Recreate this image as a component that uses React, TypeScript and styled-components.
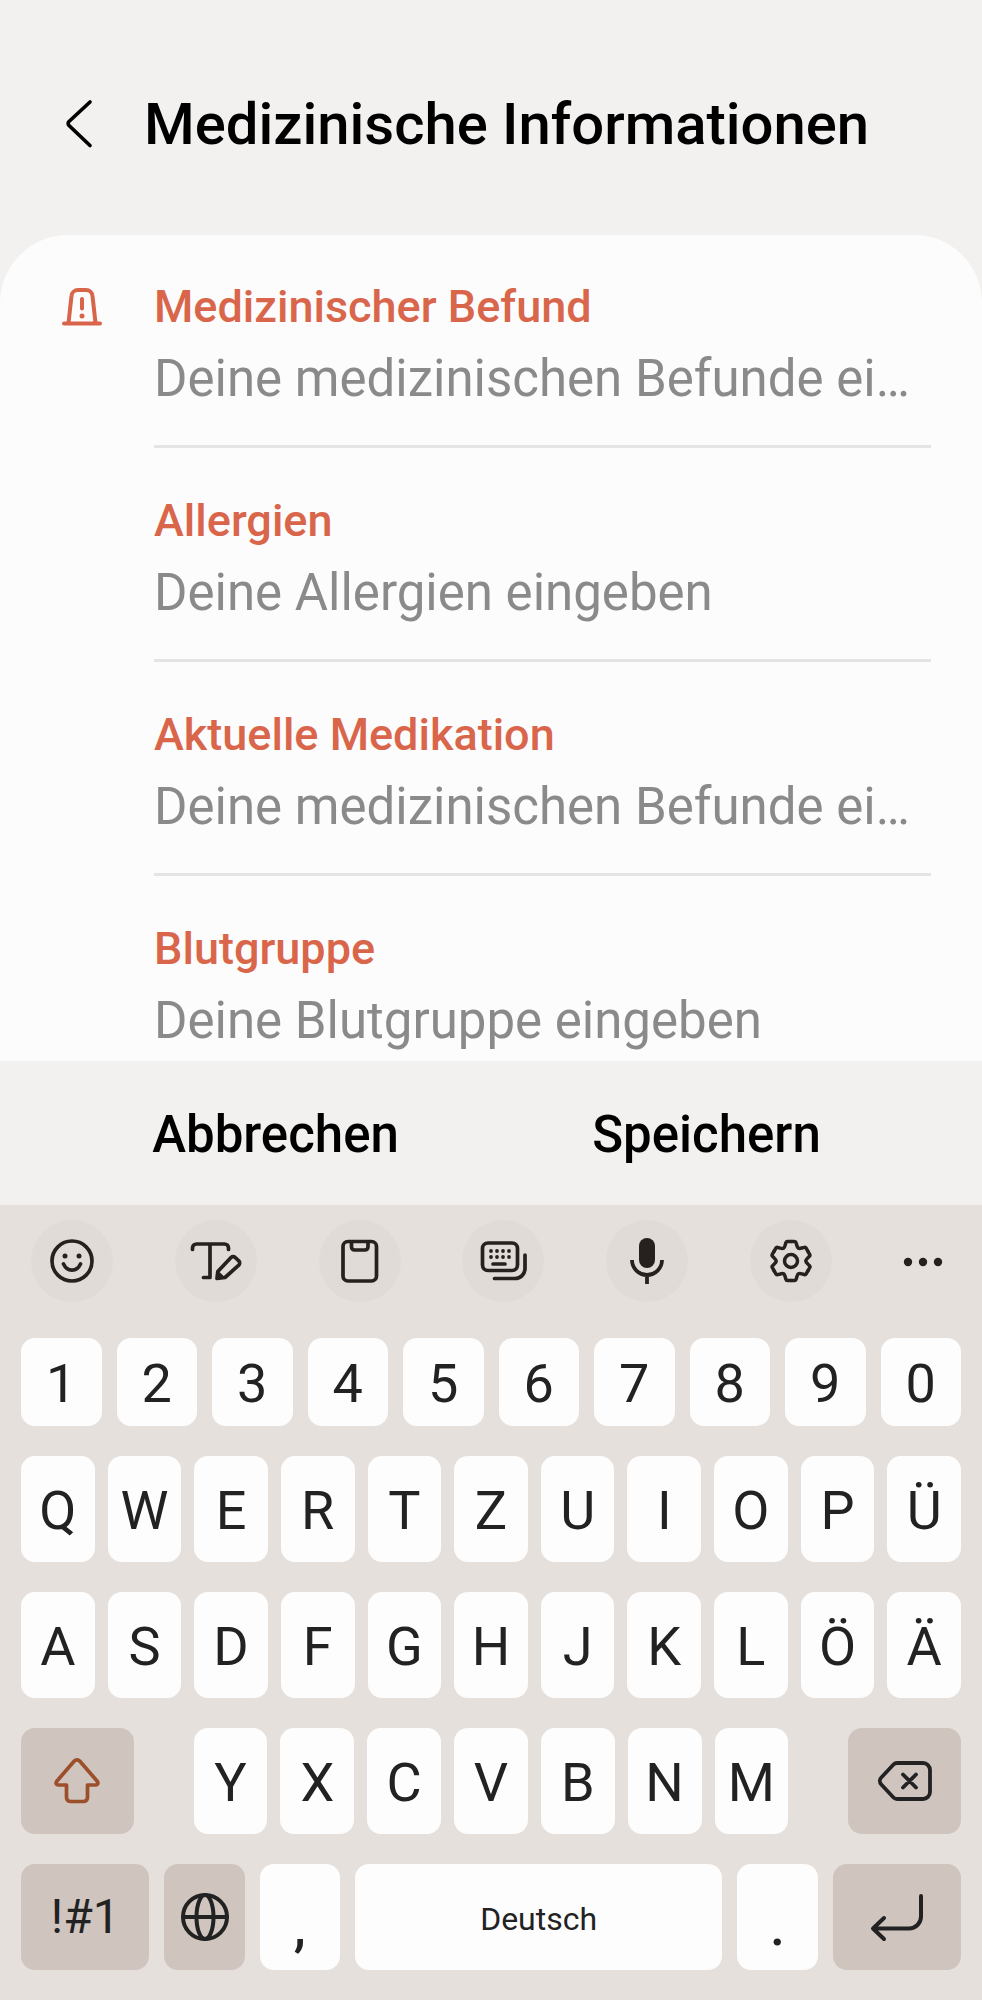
import React from "react";
import styled, { createGlobalStyle } from "styled-components";

const GlobalStyle = createGlobalStyle`
  *, *::before, *::after { box-sizing: border-box; }
  body { margin: 0; background: #f2f1ef; font-family: Roboto, "Noto Sans", sans-serif; color: #000; }
  button, input { font: inherit; color: inherit; border: 0; padding: 0; margin: 0; }
  button { cursor: pointer; }
`;

const Page = styled.div`
  display: flex;
  flex-direction: column;
  min-height: 100vh;
`;

const Header = styled.header`
  display: flex;
  align-items: center;
  gap: 40px;
  padding: 80px 40px 67px 54px;
`;

const BackButton = styled.button`
  display: flex;
  justify-content: center;
  width: 50px;
  background: none;
`;

const Title = styled.h1`
  margin: 0;
  font-size: 58px;
  line-height: 88px;
  font-weight: 500;
  white-space: nowrap;
`;

const Panel = styled.main`
  flex: 1;
  display: grid;
  grid-template-columns: 114px 1fr;
  align-items: start;
  padding: 42px 51px 0 40px;
  border-radius: 68px 68px 0 0;
  background: #fcfcfc;
`;

const AlertSlot = styled.div`
  display: flex;
  padding: 10px 0 0 21px;
`;

const FieldList = styled.div`
  min-width: 0;
`;

const FieldBlock = styled.div`
  padding: 43px 0 26px;
  border-bottom: 3px solid #e4e4e4;

  &:first-child { padding-top: 0; }
  &:last-child { padding-bottom: 0; border-bottom: 0; }
`;

const FieldLabel = styled.label`
  display: block;
  font-size: 45px;
  line-height: 60px;
  font-weight: 500;
  color: #d9664b;
`;

const FieldInput = styled.input`
  display: block;
  width: 100%;
  height: 82px;
  font-size: 51px;
  background: none;
  outline: none;
  text-overflow: ellipsis;

  &::placeholder { color: #8a8a8a; opacity: 1; }
`;

const Actions = styled.div`
  display: grid;
  grid-template-columns: 1fr 1fr;
  padding: 0 60px;
`;

const ActionButton = styled.button`
  height: 144px;
  padding-top: 4px;
  background: none;
  font-size: 51px;
  line-height: 64px;
  font-weight: 500;
`;

const Keyboard = styled.section`
  display: flex;
  flex-direction: column;
  gap: 30px;
  padding: 15px 21px 30px;
  background: #e6e0dd;
`;

const Toolbar = styled.div`
  display: flex;
  justify-content: space-between;
  align-items: center;
  padding: 0 9px 6px 10px;
`;

const ToolButton = styled.button<{ $plain?: boolean }>`
  display: flex;
  align-items: center;
  justify-content: center;
  width: ${(p) => (p.$plain ? 58 : 82)}px;
  height: 82px;
  border-radius: 50%;
  background: ${(p) => (p.$plain ? "none" : "#e1dbd8")};
  color: #26201e;
`;

const KeyRow = styled.div<{ $columns: string; $gap: number; $height: number }>`
  display: grid;
  grid-template-columns: ${(p) => p.$columns};
  gap: ${(p) => p.$gap}px;
  height: ${(p) => p.$height}px;
`;

const Key = styled.button<{ $size?: number }>`
  display: flex;
  align-items: center;
  justify-content: center;
  min-width: 0;
  padding-top: 4px;
  border-radius: 14px;
  background: #fdfdfd;
  color: #222;
  font-size: ${(p) => p.$size ?? 54}px;
  line-height: 64px;
`;

const FunctionKey = styled(Key)`
  padding-top: 0;
  background: #cfc4be;
`;

const PunctuationKey = styled(Key)`
  align-items: flex-end;
  padding: 0 0 11px;
  font-weight: 500;
`;

const stroke = {
  fill: "none",
  stroke: "currentColor",
  strokeWidth: 3.7,
  strokeLinecap: "round" as const,
  strokeLinejoin: "round" as const,
};

const SmileIcon = () => (
  <svg width="48" height="48" viewBox="0 0 48 48" aria-hidden="true">
    <g {...stroke}>
      <circle cx="24" cy="24" r="20" />
      <path d="M15.500 27c2 4.200 5 6.200 8.500 6.200s6.500-2 8.500-6.200" />
    </g>
    <circle cx="17" cy="19" r="2.500" fill="currentColor" />
    <circle cx="31" cy="19" r="2.500" fill="currentColor" />
  </svg>
);

const TextEditIcon = () => (
  <svg width="54" height="48" viewBox="0 0 54 48" aria-hidden="true">
    <g {...stroke}>
      <path d="M3.500 12.500V11a4 4 0 0 1 4-4h28a4 4 0 0 1 4 4v1.500M21 7v33M14.500 40.500H21" />
      <path d="M28 41.500l.8-7L42 20.500a3 3 0 0 1 4.200 0l3.600 3.400a3 3 0 0 1 0 4.200L36 40.500z" />
    </g>
    <path d="M28 42l.8-8.500 7.500 7z" fill="currentColor" />
  </svg>
);

const ClipboardIcon = () => (
  <svg width="48" height="48" viewBox="0 0 48 48" aria-hidden="true">
    <g {...stroke}>
      <rect x="7" y="4.500" width="33.500" height="39.500" rx="5" />
      <path d="M15.500 5v5a3 3 0 0 0 3 3h10.500a3 3 0 0 0 3-3V5" />
    </g>
  </svg>
);

const KeyboardsIcon = () => (
  <svg width="50" height="48" viewBox="-2 0 50 48" aria-hidden="true">
    <g {...stroke}>
      <rect x="2.500" y="6" width="35" height="27.500" rx="5.500" />
      <path d="M13 27h12M45 18v13.500a10 10 0 0 1-10 10H14.500" />
    </g>
    <g fill="currentColor">
      {[11, 17, 23, 29].map((x) => (
        <React.Fragment key={x}>
          <circle cx={x} cy="14" r="1.900" />
          <circle cx={x} cy="20" r="1.900" />
        </React.Fragment>
      ))}
    </g>
  </svg>
);

const MicIcon = () => (
  <svg width="48" height="48" viewBox="0 0 48 48" aria-hidden="true">
    <rect x="16" y="1" width="16" height="30" rx="8" fill="currentColor" />
    <path d="M9 23a15 15 0 0 0 30 0M24 38v9" fill="none" stroke="currentColor" strokeWidth="3.800" />
  </svg>
);

const GearIcon = () => (
  <svg width="48" height="48" viewBox="-24 -24 48 48" aria-hidden="true">
    <g {...stroke} strokeWidth="3.500">
      {[0, 60, 120, 180, 240, 300].map((angle) => (
        <path
          key={angle}
          transform={`rotate(${angle})`}
          d="M0-19.500H3.500Q4.800-19.500 5.100-18.300L5.800-15.800Q6.400-13.500 7.400-12.800Q8.300-12.300 10.800-13L13.200-13.600Q14.500-14 15.100-12.900L16.900-9.750"
        />
      ))}
      <circle r="6.500" />
    </g>
  </svg>
);

const MoreIcon = () => (
  <svg width="40" height="12" viewBox="0 0 40 12" fill="currentColor" aria-hidden="true">
    <circle cx="5" cy="7" r="4.200" />
    <circle cx="20" cy="7" r="4.200" />
    <circle cx="35" cy="7" r="4.200" />
  </svg>
);

const BackIcon = () => (
  <svg width="28" height="50" viewBox="0 0 28 50" aria-hidden="true">
    <path {...stroke} d="M25 3L4 22.500a2.800 2.800 0 0 0 0 4l21 20" />
  </svg>
);

const AlertIcon = () => (
  <svg width="42" height="40" viewBox="0 0 42 40" aria-hidden="true">
    <g fill="none" stroke="#d8654a" strokeWidth="4" strokeLinecap="round" strokeLinejoin="round">
      <path d="M3 36.500h36M7.500 36l3-27a6.500 6.500 0 0 1 6.500-6h8a6.500 6.500 0 0 1 6.500 6l3 27" />
      <path d="M21 12v9.500" />
    </g>
    <circle cx="21" cy="29" r="2.500" fill="#d8654a" />
  </svg>
);

const ShiftIcon = () => (
  <svg width="48" height="48" viewBox="0 0 48 48" aria-hidden="true">
    <path
      {...stroke}
      stroke="#9c4f2a"
      d="M21.300 4a3.800 3.800 0 0 1 5.400 0L44 24c1.700 2 .8 4-1.500 4H34.500V40.500a4 4 0 0 1-4 4h-13a4 4 0 0 1-4-4V28H5.500c-2.300 0-3.200-2-1.500-4z"
    />
  </svg>
);

const BackspaceIcon = () => (
  <svg width="56" height="44" viewBox="0 0 56 44" aria-hidden="true">
    <path
      {...stroke}
      strokeWidth="3.800"
      d="M20 4h26a7 7 0 0 1 7 7v22a7 7 0 0 1-7 7H20a5 5 0 0 1-3.500-1.500L4.300 25.500a5 5 0 0 1 0-7L16.500 5.500A5 5 0 0 1 20 4zM26 15.500l13 13M39 15.500l-13 13"
    />
  </svg>
);

const GlobeIcon = () => (
  <svg width="50" height="50" viewBox="0 0 50 50" aria-hidden="true">
    <g {...stroke} strokeWidth="4">
      <circle cx="25" cy="25" r="22" />
      <ellipse cx="25" cy="25" rx="8.500" ry="22" />
      <path d="M3 25h44" />
    </g>
  </svg>
);

const EnterIcon = () => (
  <svg width="54" height="50" viewBox="0 0 54 50" aria-hidden="true">
    <path {...stroke} strokeWidth="4" d="M51 4v20.500a12 12 0 0 1-12 12H3.500M14 26l-11 10.500 11 10.500" />
  </svg>
);

const fields = [
  { id: "befund", label: "Medizinischer Befund", hint: "Deine medizinischen Befunde eingeben" },
  { id: "allergien", label: "Allergien", hint: "Deine Allergien eingeben" },
  { id: "medikation", label: "Aktuelle Medikation", hint: "Deine medizinischen Befunde eingeben" },
  { id: "blutgruppe", label: "Blutgruppe", hint: "Deine Blutgruppe eingeben" },
];

const tools = [
  { name: "Emojis", icon: <SmileIcon /> },
  { name: "Text bearbeiten", icon: <TextEditIcon /> },
  { name: "Zwischenablage", icon: <ClipboardIcon /> },
  { name: "Tastaturmodi", icon: <KeyboardsIcon /> },
  { name: "Spracheingabe", icon: <MicIcon /> },
  { name: "Einstellungen", icon: <GearIcon /> },
];

const letterColumns = "repeat(11, minmax(0, 1fr))";

export default function App() {
  return (
    <>
      <GlobalStyle />
      <Page>
        <Header>
          <BackButton aria-label="Zurück">
            <BackIcon />
          </BackButton>
          <Title>Medizinische Informationen</Title>
        </Header>

        <Panel>
          <AlertSlot>
            <AlertIcon />
          </AlertSlot>
          <FieldList>
            {fields.map((f) => (
              <FieldBlock key={f.id}>
                <FieldLabel htmlFor={f.id}>{f.label}</FieldLabel>
                <FieldInput id={f.id} type="text" placeholder={f.hint} />
              </FieldBlock>
            ))}
          </FieldList>
        </Panel>

        <Actions>
          <ActionButton>Abbrechen</ActionButton>
          <ActionButton>Speichern</ActionButton>
        </Actions>

        <Keyboard>
          <Toolbar>
            {tools.map((t) => (
              <ToolButton key={t.name} aria-label={t.name}>
                {t.icon}
              </ToolButton>
            ))}
            <ToolButton $plain aria-label="Mehr">
              <MoreIcon />
            </ToolButton>
          </Toolbar>

          <KeyRow $columns="repeat(10, minmax(0, 1fr))" $gap={15} $height={88}>
            {[..."1234567890"].map((k) => (
              <Key key={k}>{k}</Key>
            ))}
          </KeyRow>
          {["QWERTZUIOPÜ", "ASDFGHJKLÖÄ"].map((row) => (
            <KeyRow key={row} $columns={letterColumns} $gap={13} $height={106}>
              {[...row].map((k) => (
                <Key key={k}>{k}</Key>
              ))}
            </KeyRow>
          ))}
          <KeyRow $columns="113fr 34fr repeat(7, minmax(0, 74fr)) 34fr 113fr" $gap={13} $height={106}>
            <FunctionKey aria-label="Umschalten">
              <ShiftIcon />
            </FunctionKey>
            <span />
            {[..."YXCVBNM"].map((k) => (
              <Key key={k}>{k}</Key>
            ))}
            <span />
            <FunctionKey aria-label="Löschen">
              <BackspaceIcon />
            </FunctionKey>
          </KeyRow>
          <KeyRow $columns="128fr 80fr 80fr 366fr 80fr 128fr" $gap={15} $height={106}>
            <FunctionKey $size={48}>!#1</FunctionKey>
            <FunctionKey aria-label="Sprache wechseln">
              <GlobeIcon />
            </FunctionKey>
            <PunctuationKey>,</PunctuationKey>
            <Key $size={32}>Deutsch</Key>
            <PunctuationKey>.</PunctuationKey>
            <FunctionKey aria-label="Eingabe">
              <EnterIcon />
            </FunctionKey>
          </KeyRow>
        </Keyboard>
      </Page>
    </>
  );
}
